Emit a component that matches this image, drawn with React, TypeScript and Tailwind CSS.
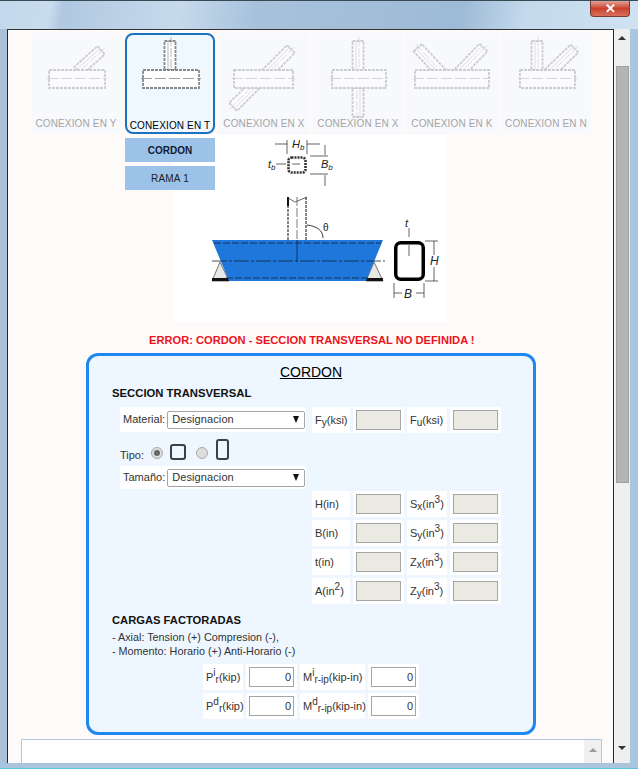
import type { ReactNode } from 'react'

const thumbs = [
  { label: 'CONEXION EN Y', kind: 'y' },
  { label: 'CONEXION EN T', kind: 't', active: true },
  { label: 'CONEXION EN X', kind: 'x' },
  { label: 'CONEXION EN X', kind: 'cross' },
  { label: 'CONEXION EN K', kind: 'k' },
  { label: 'CONEXION EN N', kind: 'n' },
]

const chords: Record<string, [number, number]> = {
  y: [18, 56],
  t: [18, 56],
  x: [15, 59],
  cross: [19, 54],
  k: [8, 74],
  n: [19, 55],
}

function Branch({ x, y, angle, len, color }: { x: number; y: number; angle: number; len: number; color: string }) {
  return (
    <g transform={`translate(${x} ${y}) rotate(${angle})`}>
      <rect x={-5.5} y={-len} width={11} height={len} fill="#fff" stroke={color} strokeWidth="1.8" strokeDasharray="3 1" />
      <line x1={-2} y1={-len} x2={-2} y2={0} stroke={color} strokeWidth="0.6" />
      <line x1={1} y1={-len - 4} x2={1} y2={0} stroke={color} strokeWidth="0.6" strokeDasharray="9 2" />
    </g>
  )
}

// dibujo de la junta: cordon horizontal y ramas segun el tipo
function Joint({ kind, color }: { kind: string; color: string }) {
  const [cx, cw] = chords[kind]
  return (
    <svg width="90" height="84" viewBox="0 0 90 84" className="block shrink-0">
      {kind === 'y' && <Branch x={47} y={36} angle={48} len={31} color={color} />}
      {kind === 't' && <Branch x={45} y={35} angle={0} len={29} color={color} />}
      {kind === 'x' && (
        <>
          <Branch x={43} y={43} angle={45} len={41} color={color} />
          <Branch x={43} y={43} angle={225} len={41} color={color} />
        </>
      )}
      {kind === 'cross' && (
        <>
          <Branch x={45} y={35} angle={0} len={29} color={color} />
          <Branch x={45} y={53} angle={180} len={29} color={color} />
        </>
      )}
      {kind === 'k' && (
        <>
          <Branch x={38} y={42} angle={-43} len={40} color={color} />
          <Branch x={48} y={42} angle={44} len={41} color={color} />
        </>
      )}
      {kind === 'n' && (
        <>
          <Branch x={36} y={35} angle={0} len={29} color={color} />
          <Branch x={44} y={42} angle={46} len={41} color={color} />
        </>
      )}
      <rect x={cx} y={35} width={cw} height={18} fill="#fff" stroke={color} strokeWidth="1.8" strokeDasharray="3 1" />
      <line x1={cx - 2} y1={43.5} x2={cx + cw + 2} y2={43.5} stroke={color} strokeWidth="0.8" strokeDasharray="11 3" />
    </svg>
  )
}

function ThumbTile({ label, kind, active }: { label: string; kind: string; active?: boolean }) {
  if (active) {
    return (
      <div className="flex h-[101px] w-[90px] flex-col items-center overflow-visible rounded-[8px] border-2 border-[#1b72c0] bg-[#eff7ff]">
        <Joint kind={kind} color="#888" />
        <span className="mt-[1px] whitespace-nowrap text-[10px] leading-[12px] tracking-[0.15px] text-black">{label}</span>
      </div>
    )
  }
  return (
    <div className="flex h-[101px] w-[90px] flex-col items-center bg-[#f8f9fc] pt-[2px]">
      <div className="opacity-45">
        <Joint kind={kind} color="#999" />
      </div>
      <span className="-mt-[1px] whitespace-nowrap text-[10px] leading-[12px] tracking-[0.15px] text-[#a4a4a4]">{label}</span>
    </div>
  )
}

function Figure() {
  return (
    <svg width="274" height="187" viewBox="0 0 274 187" className="block bg-white">
      <g fill="none" stroke="#222" strokeWidth="0.7">
        {/* seccion de la rama */}
        <rect x="115.5" y="22.5" width="17" height="15" rx="3" stroke="#333" strokeWidth="2.6" strokeDasharray="2 1" />
        <path d="M114 5v14M134 5v14M102 9h12M134 9h13M103 29h10M119 29h8M137 21h18M137 39h18M152 10v10M152 40v11" />
        {/* rama */}
        <path d="M115 62V105M133 62V105" stroke="#777" strokeDasharray="3 1" strokeWidth="1.8" />
        <path d="M115 63l7 4 12-5" stroke="#444" strokeWidth="0.8" />
        <path d="M115 62v9" stroke="#111" strokeWidth="2" />
        <path d="M124 62v43" stroke="#444" strokeWidth="0.7" strokeDasharray="9 2" />
        <path d="M134 90c9 1 16 5 16 13" strokeWidth="0.9" />
        {/* seccion del cordon */}
        <rect x="222.75" y="107.75" width="27.5" height="36.5" rx="5" stroke="#000" strokeWidth="3.5" />
        <path d="M236 93v9M236 110v11M252 106h13M252 146h13M261 106v14M261 132v14M221 148v15M251 148v15M221 158h8M243 158h8" />
      </g>
      {/* soldaduras */}
      <path d="M47 127 L39 146 L56 146 Z" fill="#e8e8e4" stroke="#555" strokeWidth="0.8" />
      <path d="M201 127 L193 146 L210 146 Z" fill="#e8e8e4" stroke="#555" strokeWidth="0.8" />
      <rect x="39" y="143" width="17" height="3" fill="#111" />
      <rect x="193" y="143" width="17" height="3" fill="#111" />
      {/* cordon azul */}
      <path d="M39 105 H210 L193 146 H56 Z" fill="#1e78dc" />
      <path d="M41 108H208M53 143H196" stroke="#123" strokeDasharray="7 2" strokeWidth="0.8" />
      <path d="M39 126H212" stroke="#123" strokeDasharray="15 2 3 2" strokeWidth="0.8" />
      <path d="M124 105V127" stroke="#123" strokeWidth="0.8" />
      <text x="119" y="13" className="text-[11px] italic" fill="#222">H<tspan fontSize="8" dy="2">b</tspan></text>
      <text x="95" y="33" className="text-[11px] italic" fill="#222">t<tspan fontSize="8" dy="2">b</tspan></text>
      <text x="148" y="33" className="text-[11px] italic" fill="#222">B<tspan fontSize="8" dy="2">b</tspan></text>
      <text x="150" y="96" fontSize="10" fill="#222">θ</text>
      <text x="232" y="92" className="text-[11px] italic" fill="#222">t</text>
      <text x="257" y="130" className="text-[12px] italic" fill="#222">H</text>
      <text x="231" y="163" className="text-[12px] italic" fill="#222">B</text>
    </svg>
  )
}

function Cell({ children, className = '', h = 'h-[26px]' }: { children: ReactNode; className?: string; h?: string }) {
  return <div className={`flex ${h} items-center bg-white pl-[3px] text-[11px] leading-none text-[#333] ${className}`}>{children}</div>
}

function Label({ main, sub, sup, unit, width }: { main: string; sub?: string; sup?: string; unit: string; width: string }) {
  return (
    <Cell className={width}>
      <span className="whitespace-nowrap">
        {main}
        {sup && <sup className="text-[10px]">{sup}</sup>}
        {sub && <sub className="text-[10px]">{sub}</sub>}
        {unit}
      </span>
    </Cell>
  )
}

function ValueBox({ value }: { value?: string }) {
  return (
    <div className="flex h-[26px] w-[51px] items-center justify-center bg-white">
      <div
        className={`flex h-[20px] w-[45px] items-center justify-end border border-[#a5a5a5] pr-[2px] text-[11px] text-[#333] ${
          value ? 'bg-white' : 'bg-[#ebeae2]'
        }`}
      >
        {value}
      </div>
    </div>
  )
}

function SelectBox() {
  return (
    <div className="flex h-[18px] w-[138px] shrink-0 items-center justify-between rounded-[2px] border border-[#a5a5a5] bg-white pl-[4px] pr-[5px] text-[11px] tracking-[0.1px] text-[#333]">
      <span>Designacion</span>
      <span className="h-0 w-0 border-x-[3.5px] border-t-[7px] border-x-transparent border-t-[#111]" />
    </div>
  )
}

function Radio({ on }: { on?: boolean }) {
  return (
    <span className="mt-[1px] flex h-[12px] w-[12px] shrink-0 items-center justify-center rounded-full border border-[#a8a8a8] bg-[#dedede]">
      {on && <span className="h-[6px] w-[6px] rounded-full bg-[#666]" />}
    </span>
  )
}

const sectionRows = [
  { left: 'H', sub: 'x', letter: 'S' },
  { left: 'B', sub: 'y', letter: 'S' },
  { left: 't', sub: 'x', letter: 'Z' },
  { left: 'A', sub: 'y', letter: 'Z', squared: true },
]

export default function App() {
  return (
    <div className="flex h-[769px] w-[638px] flex-col overflow-hidden border-t border-[#3a4a55] bg-gradient-to-r from-[#a9c2d8] via-[#9dbcd8] to-[#a9c6e0] font-['Liberation_Sans',Arial,sans-serif]">
      {/* barra de titulo */}
      <div className="flex h-[28px] shrink-0 justify-end bg-[linear-gradient(100deg,#c3d8ec_0%,#c8dcee_8%,#b0c8e0_10%,#c6daec_28%,#a8c2dc_40%,#9dbad6_72%,#c3d9ec_82%,#cfe2f2_100%)] pr-[8px]">
        <div className="flex h-[16px] w-[40px] items-center justify-center rounded-b-[4px] border border-t-0 border-[#7a3b34] bg-gradient-to-b from-[#e0a094] via-[#c9402c] to-[#d8705c] text-[13px] font-bold leading-none text-white">
          ✕
        </div>
      </div>

      <div className="flex min-h-0 flex-1 pl-[7px] pr-[8px]">
        <div className="flex min-w-0 flex-1 flex-col border-x border-t border-x-[#1a1a8c] border-t-[#333] bg-[#fffafa]">
          <div className="flex h-[3px] shrink-0" />
          <div className="ml-[23px] flex shrink-0 gap-[4px]">
            {thumbs.map((t, i) => (
              <ThumbTile key={i} label={t.label} kind={t.kind} active={t.active} />
            ))}
          </div>

          <div className="ml-[117px] flex shrink-0">
            <div className="z-10 mt-[4px] flex w-[90px] flex-col gap-[4px]">
              <button className="h-[24px] bg-[#9cc2e8] text-[10px] font-bold text-[#111a33]">CORDON</button>
              <button className="h-[24px] bg-[#9cc2e8] text-[10px] tracking-[0.2px] text-[#222]">RAMA 1</button>
            </div>
            <div className="-ml-[42px] mt-[1px]">
              <Figure />
            </div>
          </div>

          <p className="mt-[11px] h-[14px] shrink-0 pl-[141px] text-[11.15px] font-bold leading-[14px] text-[#e8141c]">
            ERROR: CORDON - SECCION TRANSVERSAL NO DEFINIDA !
          </p>

          <div className="ml-[78px] mt-[6px] h-[382px] w-[450px] shrink-0 rounded-[12px] border-[3px] border-[#1e88f0] bg-[#eef7ff] pl-[23px]">
            <h2 className="mt-[8px] pr-[23px] text-center text-[14px] font-normal leading-[16px] text-black underline">CORDON</h2>
            <h3 className="mt-[6px] text-[11.3px] font-bold leading-[14px] text-[#111]">SECCION TRANSVERSAL</h3>

            <div className="ml-[8px] mt-[7px] flex gap-[3px]">
              <Cell className="w-[186px] gap-[2px]" h="h-[25px]">
                <span>Material:</span>
                <SelectBox />
              </Cell>
              <Label main="F" sub="y" unit="(ksi)" width="w-[38px] ml-[3px]" />
              <ValueBox />
              <Label main="F" sub="u" unit="(ksi)" width="w-[40px]" />
              <ValueBox />
            </div>

            <div className="ml-[8px] mt-[7px] flex h-[24px] items-center text-[11px] text-[#333]">
              <span className="mt-[6px] w-[31px] shrink-0">Tipo:</span>
              <Radio on />
              <span className="ml-[7px] h-[16px] w-[16px] shrink-0 rounded-[3px] border-2 border-[#3a3f4a]" />
              <span className="ml-[10px]" />
              <Radio />
              <span className="-mt-[6px] ml-[8px] h-[21px] w-[13px] shrink-0 rounded-[3px] border-2 border-[#3a3f4a]" />
            </div>

            <Cell className="ml-[8px] mt-[2px] w-[186px] gap-[2px]" h="h-[23px]">
              <span>Tamaño:</span>
              <SelectBox />
            </Cell>

            <div className="ml-[200px] mt-[2px] flex flex-col gap-[3px]">
              {sectionRows.map((r) => (
                <div key={r.left + r.letter + r.sub} className="flex gap-[3px]">
                  <Cell className="w-[38px]">
                    <span className="whitespace-nowrap">
                      {r.left}(in{r.squared && <sup className="text-[10px]">2</sup>})
                    </span>
                  </Cell>
                  <ValueBox />
                  <Cell className="w-[40px]">
                    <span className="whitespace-nowrap">
                      {r.letter}
                      <sub className="text-[10px]">{r.sub}</sub>(in<sup className="text-[10px]">3</sup>)
                    </span>
                  </Cell>
                  <ValueBox />
                </div>
              ))}
            </div>

            <h3 className="mt-[9px] text-[11.2px] font-bold leading-[14px] text-[#111]">CARGAS FACTORADAS</h3>
            <p className="mt-[3px] text-[10.8px] leading-[14px] text-[#333]">- Axial: Tension (+) Compresion (-),</p>
            <p className="text-[10.8px] leading-[14px] text-[#333]">- Momento: Horario (+) Anti-Horario (-)</p>

            <div className="ml-[91px] mt-[6px] flex flex-col gap-[3px]">
              <div className="flex gap-[3px]">
                <Label main="P" sup="i" sub="r" unit="(kip)" width="w-[40px]" />
                <ValueBox value="0" />
                <Label main="M" sup="i" sub="r-ip" unit="(kip-in)" width="w-[65px]" />
                <ValueBox value="0" />
              </div>
              <div className="flex gap-[3px]">
                <Label main="P" sup="d" sub="r" unit="(kip)" width="w-[40px]" />
                <ValueBox value="0" />
                <Label main="M" sup="d" sub="r-ip" unit="(kip-in)" width="w-[65px]" />
                <ValueBox value="0" />
              </div>
            </div>
          </div>

          <div className="ml-[13px] mt-[4px] flex h-[40px] w-[581px] shrink-0 justify-end border border-[#b4c8dc] bg-white">
            <div className="flex w-[17px] justify-center bg-[#f0f0f0] pt-[8px]">
              <span className="h-0 w-0 border-x-[4px] border-b-[4px] border-x-transparent border-b-[#9a9a9a]" />
            </div>
          </div>
        </div>

        {/* scrollbar */}
        <div className="flex w-[16px] shrink-0 flex-col items-center bg-[#efefef]">
          <div className="flex h-[37px] w-full shrink-0 justify-center pt-[7px]">
            <span className="h-0 w-0 border-x-[4px] border-b-[4px] border-x-transparent border-b-[#333]" />
          </div>
          <div className="h-[417px] w-[13px] shrink-0 border border-[#a0a0a0] bg-[#b4b4b4]" />
          <div className="mt-auto flex h-[17px] items-start">
            <span className="h-0 w-0 border-x-[4px] border-t-[4px] border-x-transparent border-t-[#333]" />
          </div>
        </div>
      </div>

      <div className="h-[6px] shrink-0 border-b border-[#5ec4e4] bg-[#a9c4dc]" />
    </div>
  )
}
